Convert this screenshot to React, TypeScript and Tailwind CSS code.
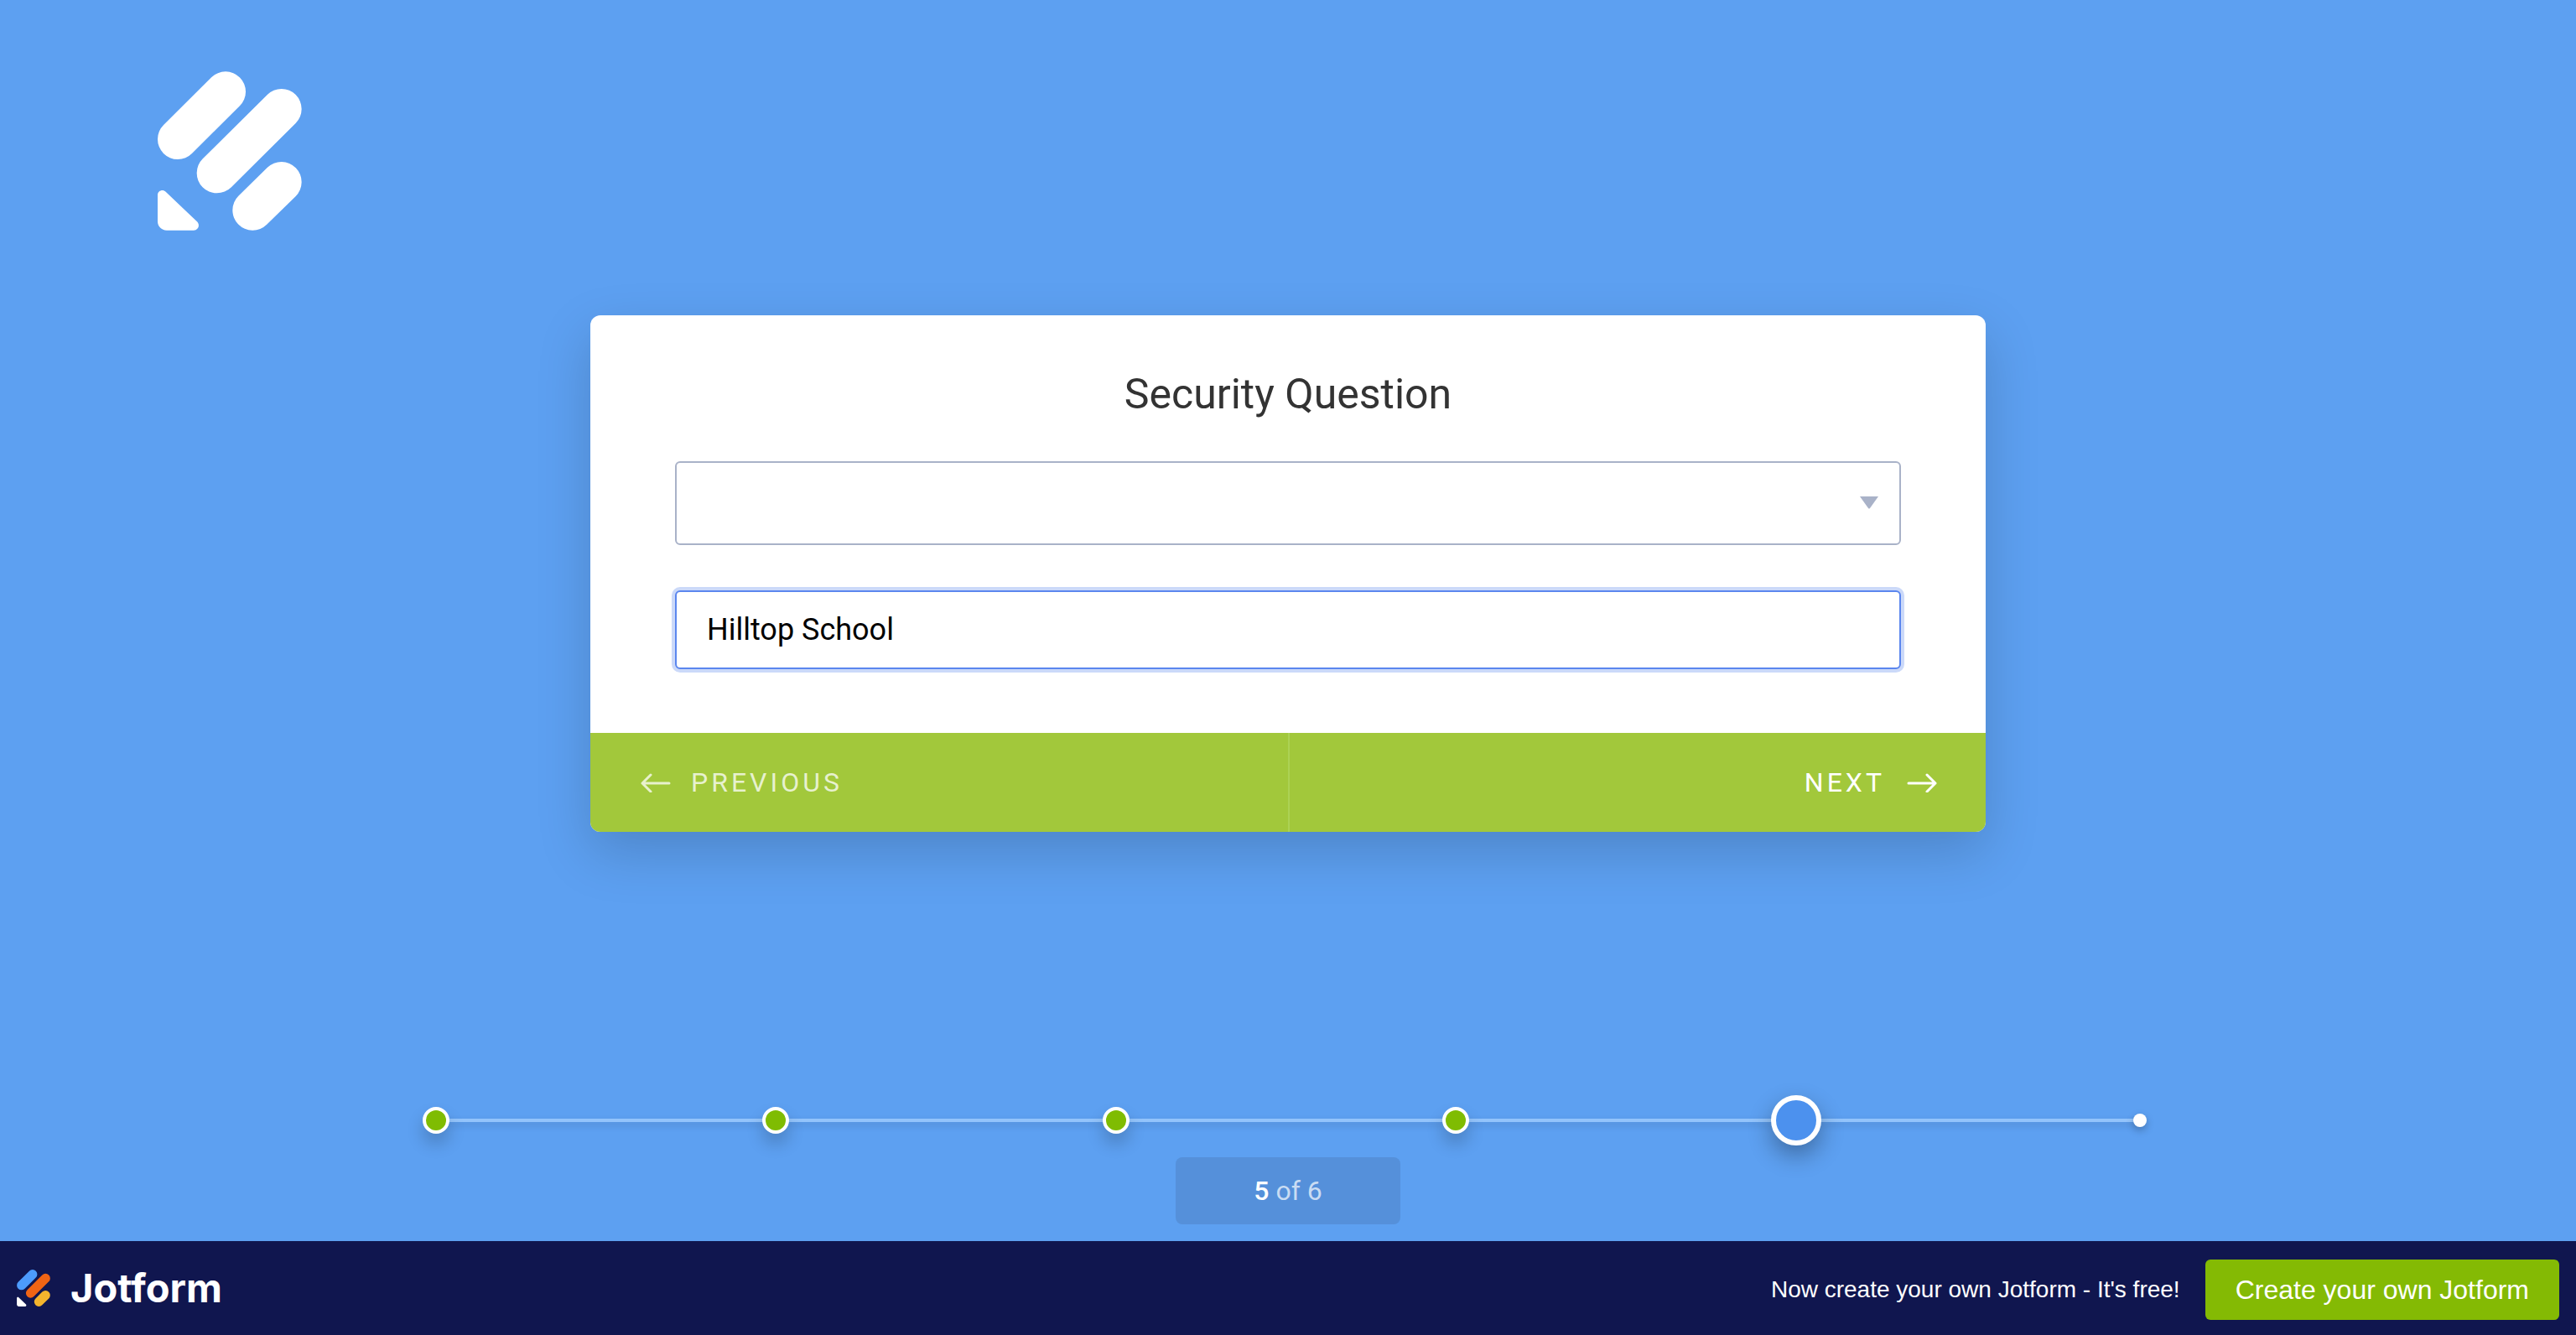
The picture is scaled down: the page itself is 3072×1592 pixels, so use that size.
import { useId } from "react";

type MarkProps = { className: string; colors: [string, string, string, string] };

function PencilMark({ className, colors }: MarkProps) {
  const [first, second, third, tip] = colors;
  return (
    <svg viewBox="84 75 516 570" className={className} fill="none" strokeWidth={144} strokeLinecap="round" aria-hidden="true">
      <path d="M156 318 327 148" stroke={first} />
      <path d="M296 439 527 210" stroke={second} />
      <path d="M424 572 527 471" stroke={third} />
      <path d="M84 517c0-14 18-22 29-11l112 107c12 12 4 31-12 31h-97c-18 0-32-14-32-32z" fill={tip} />
    </svg>
  );
}

function Arrow({ back = false }: { back?: boolean }) {
  return (
    <svg viewBox="0 0 36 24" className="h-6 w-9" fill="none" stroke="currentColor" strokeWidth={3} strokeLinecap="round" strokeLinejoin="round" aria-hidden="true">
      <path d={back ? "M34 13H2M12 3 2 13l10 10" : "M2 13H34M24 3 34 13 24 23"} />
    </svg>
  );
}

function Step({ state }: { state: "done" | "current" | "upcoming" }) {
  return (
    <span className="flex w-0 items-center justify-center">
      {state === "done" && (
        <span className="z-10 size-8 shrink-0 rounded-full border-4 border-white bg-[#7fbc02] shadow-[0_12px_20px_rgba(0,0,0,0.2)]" />
      )}
      {state === "current" && (
        <span className="z-10 size-15 shrink-0 rounded-full border-6 border-white bg-[#4c91ee] shadow-[0_12px_28px_rgba(0,0,0,0.32)]" />
      )}
      {state === "upcoming" && (
        <span className="z-10 size-4 shrink-0 rounded-full bg-white shadow-[0_4px_10px_rgba(0,0,0,0.25)]" />
      )}
    </span>
  );
}

function Track({ last = false }: { last?: boolean }) {
  return (
    <span className={`h-1 bg-[#93c4fb] shadow-[0_4px_8px_rgba(0,0,0,0.15)] ${last ? "flex-[410]" : "flex-[405]"}`} />
  );
}

export default function App() {
  const id = useId();
  return (
    <div className="flex min-h-screen flex-col bg-[#5da0f1] font-['Roboto',sans-serif]">
      <header className="px-47 pt-[85px]">
        <PencilMark className="h-[190px] w-[172px]" colors={["#fff", "#fff", "#fff", "#fff"]} />
      </header>

      <main className="flex flex-1 flex-col items-center justify-between pt-[101px] pb-5">
        <form
          className="w-full max-w-[1664px] overflow-hidden rounded-xl bg-white shadow-[0_24px_64px_rgba(0,0,0,0.17)]"
          onSubmit={(e) => e.preventDefault()}
        >
          <div className="flex flex-col px-[101px] pt-16 pb-19">
            <h1 id={`${id}-title`} className="text-center text-[50px] leading-[60px] text-[#333]">
              Security Question
            </h1>
            <div className="relative mt-[50px]">
              <select
                aria-labelledby={`${id}-title`}
                className="block h-[100px] w-full appearance-none rounded-md border-2 border-[#a9b2c8] bg-white px-9 text-4xl text-black"
                defaultValue=""
              >
                <option value=""></option>
              </select>
              <svg viewBox="0 0 22 15" className="pointer-events-none absolute top-[42px] right-[27px] h-[15px] w-[22px]" aria-hidden="true">
                <path d="M0 0h22L12 14q-1 1-2 0z" fill="#a9b2c8" />
              </svg>
            </div>
            <input
              type="text"
              aria-label="Security answer"
              defaultValue="Hilltop School"
              className="mt-[54px] h-[94px] w-full rounded-md border-2 border-[#5b86ee] bg-white px-9 text-4xl text-black shadow-[0_0_0_4px_#cbd9f9] outline-none"
            />
          </div>
          <div className="flex h-[118px] bg-[#a2c83b] text-[32px] tracking-[4px]">
            <button type="button" className="flex flex-1 items-center gap-6 border-r-2 border-[#acd254] pl-15 text-white/75">
              <Arrow back />
              PREVIOUS
            </button>
            <button type="submit" className="flex flex-1 items-center justify-end gap-[26px] pr-[58px] text-white">
              NEXT
              <Arrow />
            </button>
          </div>
        </form>

        <div className="flex w-2/3 flex-col items-center gap-[14px]">
          <div className="flex h-15 w-full items-center px-2">
            <Step state="done" />
            <Track />
            <Step state="done" />
            <Track />
            <Step state="done" />
            <Track />
            <Step state="done" />
            <Track />
            <Step state="current" />
            <Track last />
            <Step state="upcoming" />
          </div>
          <p className="flex h-20 w-[268px] items-center justify-center gap-2 rounded-lg bg-[#5590da] text-[32px] text-white/70">
            <strong className="font-medium text-white">5</strong> of 6
          </p>
        </div>
      </main>

      <footer className="flex h-28 items-center justify-between bg-[#10164f] px-5 font-['Liberation_Sans',sans-serif] text-white">
        <a href="#" className="flex items-center gap-6">
          <PencilMark className="h-11 w-10" colors={["#4c9bfc", "#f06414", "#f4b42d", "#fff"]} />
          <span className="font-['Inter',sans-serif] text-[47px] font-bold">Jotform</span>
        </a>
        <div className="flex items-center gap-[30px] pt-1">
          <span className="text-[28px]">Now create your own Jotform - It's free!</span>
          <a href="#" className="flex h-18 items-center rounded-md bg-[#84ba04] px-9 text-[32px]">
            Create your own Jotform
          </a>
        </div>
      </footer>
    </div>
  );
}
